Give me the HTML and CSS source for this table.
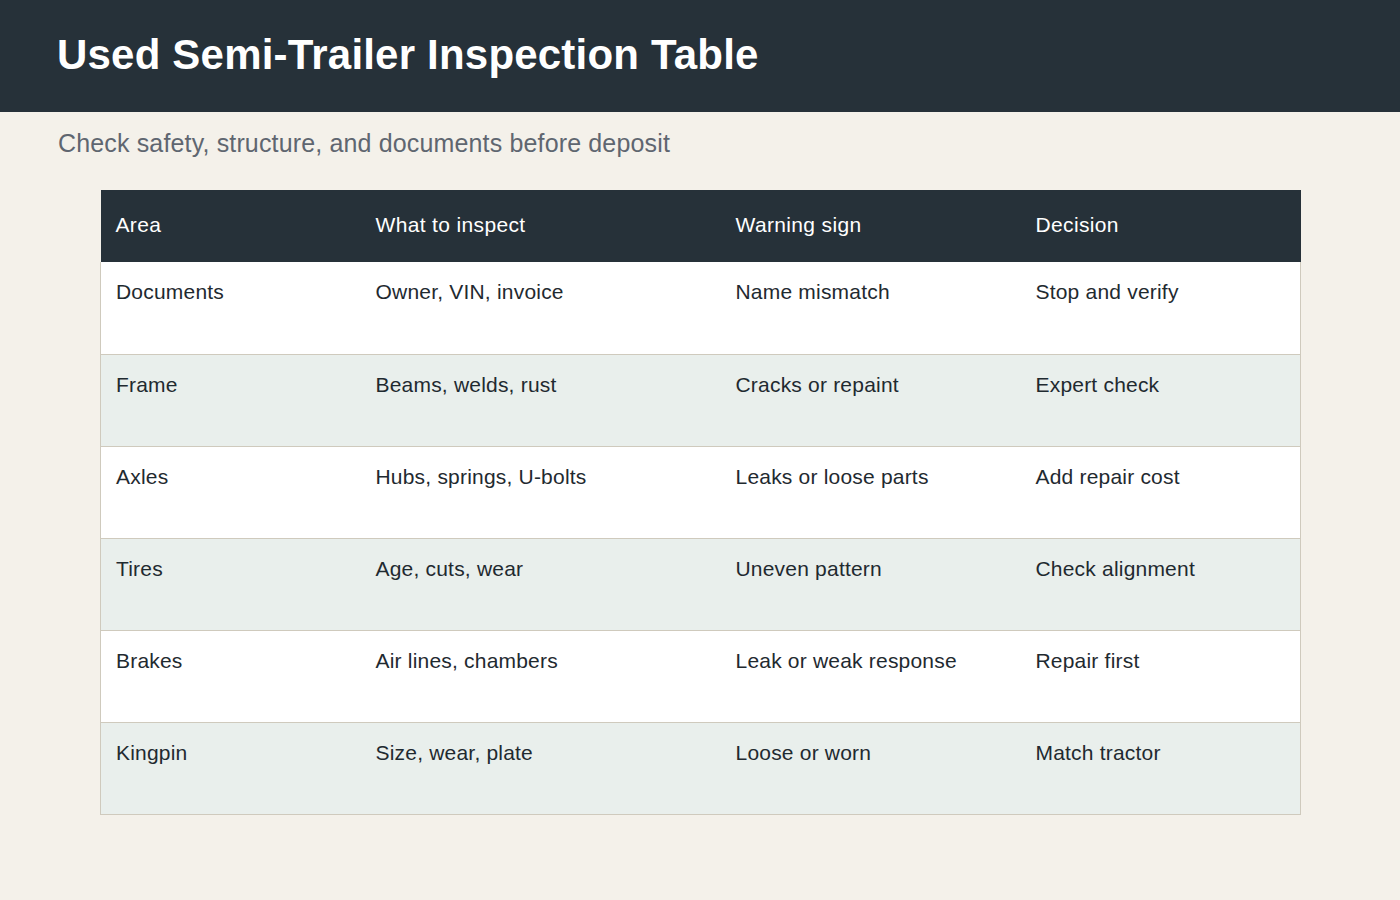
FILE: index.html
```html
<!DOCTYPE html>
<html lang="en">
<head>
<meta charset="utf-8">
<title>Used Semi-Trailer Inspection Table</title>
<link rel="stylesheet" href="styles.css">
</head>
<body>
<header class="topbar">
  <h1 class="title">Used Semi-Trailer Inspection Table</h1>
</header>
<main class="content">
  <p class="subtitle">Check safety, structure, and documents before deposit</p>
  <table class="inspect">
    <colgroup>
      <col class="c1"><col class="c2"><col class="c3"><col class="c4">
    </colgroup>
    <thead>
      <tr><th>Area</th><th>What to inspect</th><th>Warning sign</th><th>Decision</th></tr>
    </thead>
    <tbody>
      <tr><td>Documents</td><td>Owner, VIN, invoice</td><td>Name mismatch</td><td>Stop and verify</td></tr>
      <tr><td>Frame</td><td>Beams, welds, rust</td><td>Cracks or repaint</td><td>Expert check</td></tr>
      <tr><td>Axles</td><td>Hubs, springs, U-bolts</td><td>Leaks or loose parts</td><td>Add repair cost</td></tr>
      <tr><td>Tires</td><td>Age, cuts, wear</td><td>Uneven pattern</td><td>Check alignment</td></tr>
      <tr><td>Brakes</td><td>Air lines, chambers</td><td>Leak or weak response</td><td>Repair first</td></tr>
      <tr><td>Kingpin</td><td>Size, wear, plate</td><td>Loose or worn</td><td>Match tractor</td></tr>
    </tbody>
  </table>
</main>
</body>
</html>
```

FILE: styles.css
```css
* { box-sizing: border-box; }
html, body { margin: 0; padding: 0; }
body {
  background: #f4f1ea;
  font-family: "Liberation Sans", Arial, sans-serif;
  color: #1f2a30;
  width: 1400px;
  height: 900px;
  overflow: hidden;
}
.topbar {
  background: #263139;
  height: 112px;
  display: flex;
  align-items: center;
  padding: 0 57px;
}
.title {
  margin: 0;
  color: #ffffff;
  font-size: 42px;
  letter-spacing: 0.2px;
  font-weight: 700;
  line-height: 1;
  padding-bottom: 2px;
}
.content {
  padding: 0 100px;
}
.subtitle {
  margin: 0 0 0 -42px;
  padding-top: 17px;
  font-size: 25px;
  letter-spacing: 0.15px;
  line-height: 28px;
  color: #5f6670;
  height: 78px;
}
.inspect {
  width: 1200px;
  border-collapse: collapse;
  table-layout: fixed;
  font-size: 21px;
  letter-spacing: 0.2px;
  line-height: 24px;
}
.c1 { width: 260px; }
.c2 { width: 360px; }
.c3 { width: 300px; }
.c4 { width: 280px; }
.inspect thead th {
  background: #263139;
  color: #ffffff;
  font-weight: 400;
  letter-spacing: 0.35px;
  text-align: left;
  padding: 23px 15px 25px;
  height: 72px;
}
.inspect tbody td {
  text-align: left;
  vertical-align: top;
  padding: 18px 15px 49px;
  height: 92px;
  border-bottom: 1px solid #cfcabd;
}
.inspect tbody tr { background: #ffffff; }
.inspect tbody tr:nth-child(even) { background: #e9efec; }
.inspect tbody tr td:first-child { border-left: 1px solid #cfcabd; }
.inspect tbody tr td:last-child { border-right: 1px solid #cfcabd; }
```
